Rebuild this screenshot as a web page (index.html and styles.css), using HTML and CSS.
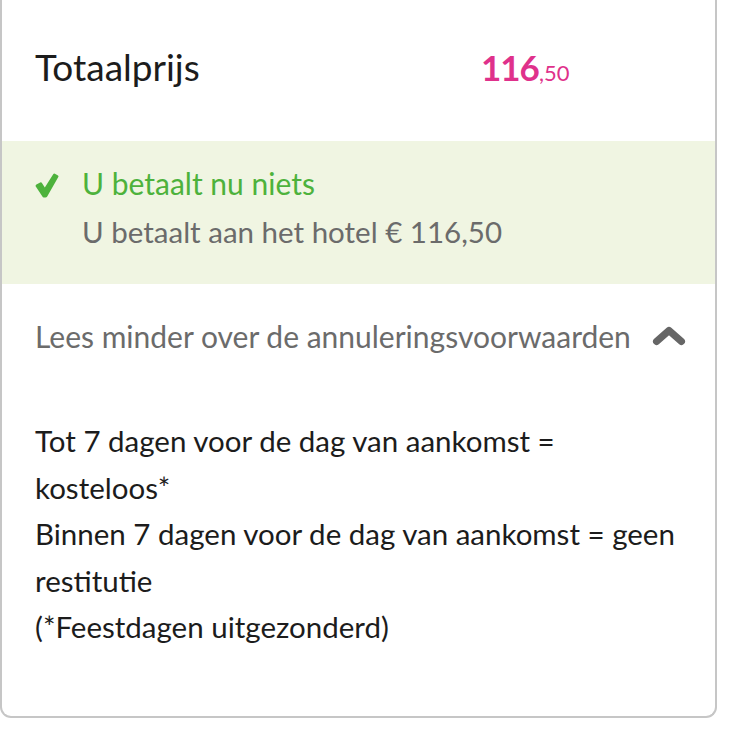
FILE: index.html
```html
<!DOCTYPE html>
<html lang="nl">
<head>
<meta charset="utf-8">
<title>Totaalprijs</title>
<link rel="stylesheet" href="styles.css">
</head>
<body>
<div class="card">
  <div class="total-row">
    <span class="total-label">Totaalprijs</span>
    <span class="price"><span class="price-int">116</span><span class="price-dec">,50</span></span>
  </div>
  <div class="pay-box">
    <div class="pay-line">
      <svg class="check" viewBox="0 0 24 25" width="24" height="25" aria-hidden="true">
        <path d="M0.6 13.2 Q0.4 12 1.4 11.4 L5.2 9.4 Q6.2 9 6.8 9.8 L9.8 14.6 L18.2 1.2 Q18.9 0.3 19.9 0.7 L23 2.4 Q23.9 3 23.3 4 L12.2 23.6 Q11.6 24.6 10.4 24.6 L8.8 24.6 Q7.8 24.6 7.4 23.6 Z" fill="#4db23c"/>
      </svg>
      <span class="pay-now">U betaalt nu niets</span>
    </div>
    <div class="pay-sub">U betaalt aan het hotel € 116,50</div>
  </div>
  <div class="toggle">
    <span class="toggle-text">Lees minder over de annuleringsvoorwaarden</span>
    <svg class="chevron" viewBox="0 0 34 20" width="34" height="20" aria-hidden="true">
      <polyline points="4.5,15.5 17,4.5 29.5,15.5" fill="none" stroke="#666666" stroke-width="7" stroke-linecap="round" stroke-linejoin="round"/>
    </svg>
  </div>
  <div class="conditions">
    Tot 7 dagen voor de dag van aankomst = kosteloos*<br>
    Binnen 7 dagen voor de dag van aankomst = geen restitutie<br>
    (*Feestdagen uitgezonderd)
  </div>
</div>
</body>
</html>
```
FILE: styles.css
```css
html, body {
  margin: 0;
  padding: 0;
  background: #ffffff;
}

body {
  font-family: Lato, "Open Sans", sans-serif;
  color: #222222;
}

.card {
  width: 717px;
  box-sizing: border-box;
  border: 2px solid #c6c6c6;
  border-top: none;
  border-radius: 0 0 11px 11px;
  background: #ffffff;
  height: 718px;
}

.total-row {
  height: 141px;
  display: grid;
  grid-template-columns: 446px auto;
  align-items: center;
  padding-left: 33px;
  padding-bottom: 8px;
  box-sizing: border-box;
}

.total-label {
  font-size: 37px;
  color: #1c1c1c;
}

.price {
  color: #df318b;
  font-weight: 700;
  white-space: nowrap;
}

.price-int {
  font-size: 35px;
  letter-spacing: -1px;
}

.price-dec {
  font-size: 22px;
  font-weight: 400;
}

.pay-box {
  background: #f0f5e2;
  height: 143px;
  box-sizing: border-box;
  padding: 22px 0 0 33px;
}

.pay-line {
  display: flex;
  align-items: flex-start;
  gap: 23px;
}

.check {
  flex: none;
  margin-top: 10px;
}

.pay-now {
  color: #4db23c;
  font-size: 30px;
  line-height: 40px;
}

.pay-sub {
  color: #6b6b6b;
  font-size: 29.5px;
  line-height: 40px;
  margin-top: 9px;
  padding-left: 47px;
}

.toggle {
  display: flex;
  align-items: center;
  gap: 21px;
  padding: 32px 0 0 33px;
  height: 40px;
}

.toggle-text {
  color: #6b6b6b;
  font-size: 30px;
  line-height: 40px;
  white-space: nowrap;
}

.chevron {
  flex: none;
}

.conditions {
  padding: 62px 33px 0 33px;
  font-size: 29.5px;
  line-height: 46.5px;
  color: #1c1c1c;
}
```
